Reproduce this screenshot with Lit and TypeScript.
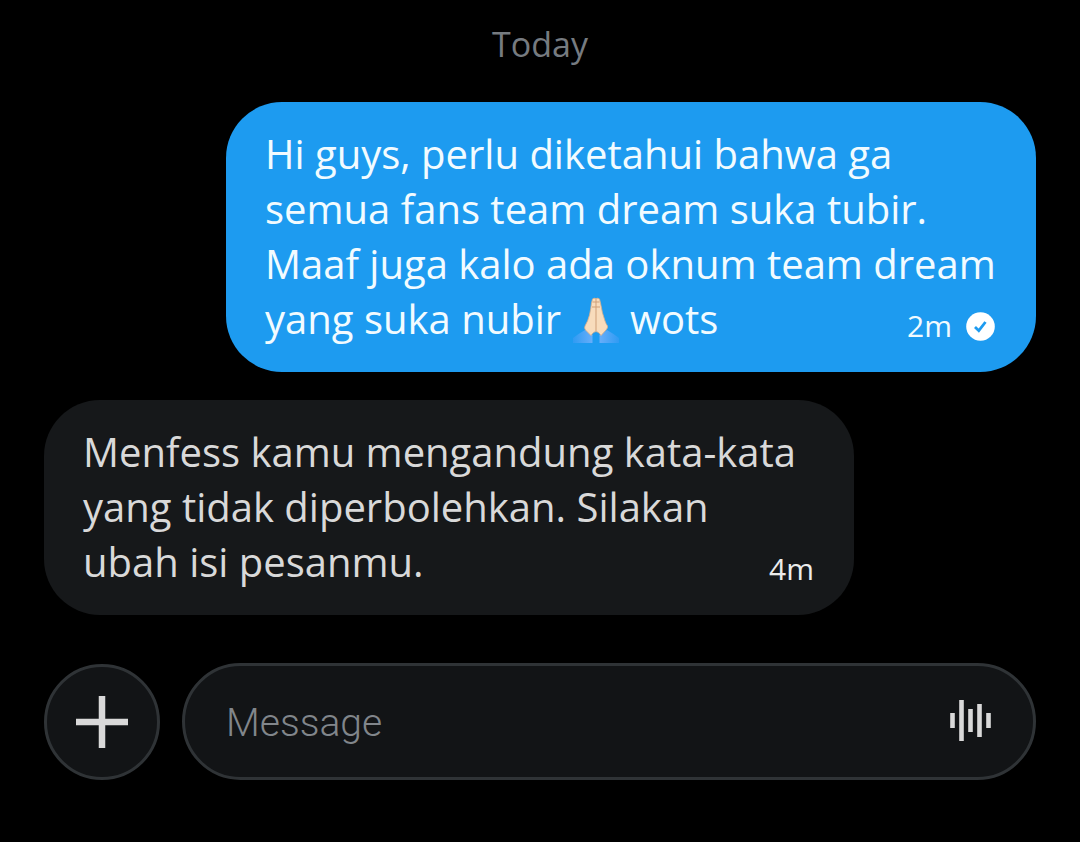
import { LitElement, html, css, nothing } from "lit";
import { customElement, property, state } from "lit/decorators.js";

interface Message {
  lines: unknown[];
  time: string;
  own: boolean;
}

const prayingHands = html`<svg class="emoji" viewBox="0 0 48 48" role="img" aria-label="🙏🏻">
  <defs>
    <linearGradient id="cuffL" x1="0" x2="1"><stop offset="0" stop-color="#2f9bf3" /><stop offset="1" stop-color="#6fb0fa" /></linearGradient>
    <linearGradient id="cuffR" x1="1" x2="0"><stop offset="0" stop-color="#2f9bf3" /><stop offset="1" stop-color="#6fb0fa" /></linearGradient>
  </defs>
  <path fill="url(#cuffL)" d="M1 46V41Q6 37 13 33L23 40V46Z" />
  <path fill="url(#cuffR)" d="M47 46V41Q42 37 35 33L25 40V46Z" />
  <path fill="#1d9bf0" d="M20.500 46V39L24 35L27.500 39V46Z" />
  <path fill="#f8dcbc" stroke="#d9ae8a" stroke-width=".8" d="M20.500 2Q22 .6 24 1.600Q26 .6 27.500 2L28.500 6Q30 16 33 24Q34 27 35.500 29Q36 31 34 33L29 38.500Q26.500 34.500 24 34.500Q21.500 34.500 19 38.500L13.500 33Q12 31 13 29Q16 24 17.500 18Q19 11 19.500 6Z" />
  <path fill="none" stroke="#cf9f78" stroke-width="1" d="M24 2V34M20.500 5H27.500M20 10H28" />
</svg>`;

@customElement("chat-bubble")
export class ChatBubble extends LitElement {
  @property({ type: Boolean, reflect: true }) own = false;
  @property() time = "";

  static styles = css`
    :host {
      display: flex;
      justify-content: space-between;
      align-items: flex-end;
      box-sizing: border-box;
      width: 75vw;
      padding: 24px 40px 26px 39px;
      border-radius: 56px;
      background: #16181a;
      color: #d9d9d9;
      white-space: nowrap;
    }
    :host([own]) {
      align-self: flex-end;
      background: #1d9bf0;
      color: #f2fbff;
    }
    .text {
      width: 0;
      flex: 1;
      font-size: 40px;
      line-height: 55px;
    }
    .meta {
      display: flex;
      align-items: center;
      gap: 14px;
      font-size: 30px;
      line-height: 40px;
      color: #ececec;
    }
    :host([own]) .meta {
      color: #f2fbff;
    }
    .check {
      width: 30px;
      height: 30px;
    }
  `;

  render() {
    return html`
      <div class="text"><slot></slot></div>
      <div class="meta">
        <span>${this.time}</span>
        ${this.own
          ? html`<svg class="check" viewBox="0 0 30 30" role="img" aria-label="Sent">
              <circle cx="14.500" cy="15.500" r="14.300" fill="#fff" />
              <path d="M9 16L12.800 19.700L19.500 11" fill="none" stroke="#1d9bf0" stroke-width="2.800" />
            </svg>`
          : nothing}
      </div>
    `;
  }
}

@customElement("app-root")
export class AppRoot extends LitElement {
  @state() private messages: Message[] = [
    {
      own: true,
      time: "2m",
      lines: [
        "Hi guys, perlu diketahui bahwa ga",
        "semua fans team dream suka tubir.",
        "Maaf juga kalo ada oknum team dream",
        html`yang suka nubir ${prayingHands} wots`,
      ],
    },
    {
      own: false,
      time: "4m",
      lines: ["Menfess kamu mengandung kata-kata", "yang tidak diperbolehkan. Silakan", "ubah isi pesanmu."],
    },
  ];

  static styles = css`
    :host {
      display: block;
      box-sizing: border-box;
      min-height: 100vh;
      padding: 19px 44px 62px;
      background: #000;
      font-family: "Open Sans", "Noto Sans", sans-serif;
    }
    .day {
      margin: 0 0 33px;
      text-align: center;
      font-size: 34px;
      line-height: 50px;
      font-weight: 400;
      color: #767b80;
    }
    .thread {
      display: flex;
      flex-direction: column;
      gap: 28px;
    }
    .emoji {
      width: 48px;
      height: 48px;
      vertical-align: -11px;
    }
    .composer {
      display: flex;
      align-items: flex-end;
      gap: 22px;
      margin-top: 48px;
    }
    .add,
    .field {
      box-sizing: border-box;
      border: 3px solid #2f3336;
      border-radius: 59px;
      background: #121416;
    }
    .add {
      display: grid;
      place-items: center;
      flex: none;
      width: 116px;
      height: 116px;
      padding: 0;
      cursor: pointer;
    }
    .field {
      display: flex;
      align-items: center;
      flex: 1;
      min-width: 0;
      height: 117px;
      padding: 0 40px 0 41px;
    }
    .input {
      flex: 1;
      min-width: 0;
      padding: 2px 0 0;
      border: 0;
      outline: 0;
      background: none;
      color: #d9d9d9;
      font-family: Roboto, sans-serif;
      font-size: 39px;
      font-weight: 300;
      line-height: 54px;
    }
    .input::placeholder {
      color: #81868b;
      opacity: 1;
    }
    .voice {
      display: block;
      flex: none;
      padding: 0;
      border: 0;
      background: none;
      cursor: pointer;
    }
    .icon-add {
      width: 52px;
      height: 52px;
    }
    .icon-voice {
      display: block;
      width: 44px;
      height: 44px;
    }
  `;

  render() {
    return html`
      <h2 class="day">Today</h2>
      <div class="thread">
        ${this.messages.map(
          (m) => html`<chat-bubble ?own=${m.own} .time=${m.time}>${m.lines.map((l, i) => html`${i ? html`<br />` : nothing}${l}`)}</chat-bubble>`
        )}
      </div>
      <form class="composer" @submit=${(e: Event) => e.preventDefault()}>
        <button class="add" type="button" aria-label="Add">
          <svg class="icon-add" viewBox="0 0 52 52" aria-hidden="true">
            <path d="M26 0V52M0 26H52" stroke="#d9d9d9" stroke-width="6.500" />
          </svg>
        </button>
        <div class="field">
          <input class="input" type="text" placeholder="Message" aria-label="Message" />
          <button class="voice" type="button" aria-label="Record voice message">
            <svg class="icon-voice" viewBox="0 0 44 44" aria-hidden="true">
              <path d="M3.500 13V28M12.500 0V41M21.500 9V32M30.500 4V37M39.500 13V28" stroke="#d9d9d9" stroke-width="4.600" />
            </svg>
          </button>
        </div>
      </form>
    `;
  }
}
